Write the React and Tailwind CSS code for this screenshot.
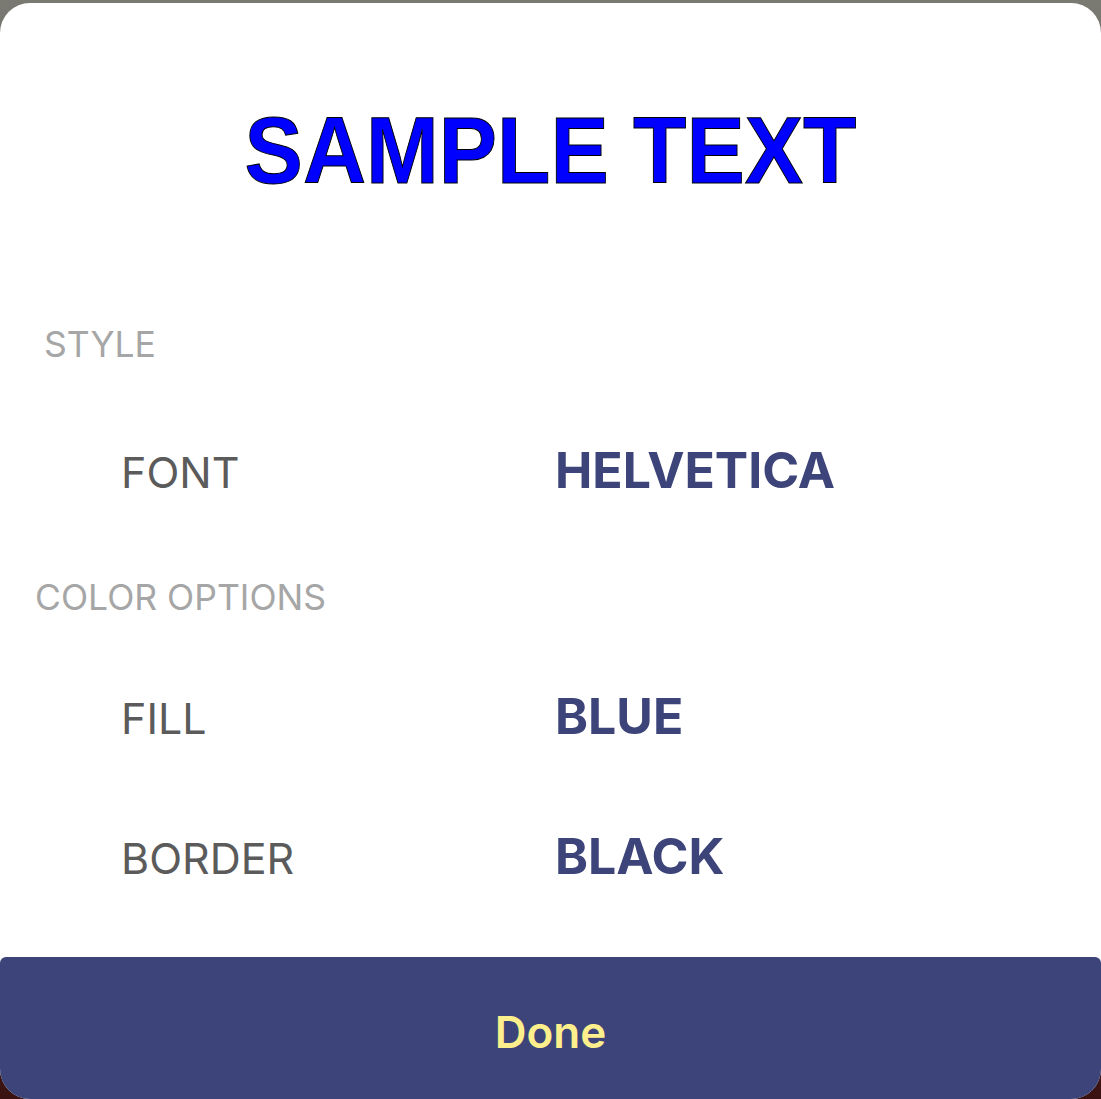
import React from 'react';

const Row = ({ label, value, className = '' }) => (
  <div className={`flex items-baseline pl-[121px] leading-none ${className}`}>
    <span className="w-[434px] text-[43px] text-[#5b5b5b]">{label}</span>
    <span className="text-[50px] font-bold text-[#3c4479]">{value}</span>
  </div>
);

export default function App() {
  return (
    <div
      className="w-[1101px] h-[1099px] overflow-hidden bg-gradient-to-b from-[#7a7a72] to-[#3a1212] flex flex-col pt-[3px]"
      style={{ fontFamily: 'Inter, "Noto Sans", sans-serif' }}
    >
      <div className="flex-1 flex flex-col bg-white rounded-t-[30px] rounded-b-[30px]">
        <div className="pt-[100px] text-center leading-none">
          <span
            className="inline-block scale-x-[0.92] text-[95px] font-bold text-[#0000ff] [-webkit-text-stroke:1px_black]"
            style={{ fontFamily: '"Liberation Sans", Arial, sans-serif' }}
          >
            SAMPLE TEXT
          </span>
        </div>

        <div className="mt-[129px] pl-[44px] text-[35.5px] leading-none text-[#a6a6a6]">STYLE</div>
        <Row label="FONT" value="HELVETICA" className="mt-[82px]" />

        <div className="mt-[85px] pl-[35px] text-[35.5px] leading-none text-[#a6a6a6]">COLOR OPTIONS</div>
        <Row label="FILL" value="BLUE" className="mt-[76px]" />
        <Row label="BORDER" value="BLACK" className="mt-[90px]" />

        <div className="flex-1" />

        <button className="h-[142px] w-full flex items-center justify-center pt-[8px] bg-[#3c4479] rounded-t-[6px] rounded-b-[30px] text-[44px] font-semibold text-[#fdf08c] leading-none">
          Done
        </button>
      </div>
    </div>
  );
}
